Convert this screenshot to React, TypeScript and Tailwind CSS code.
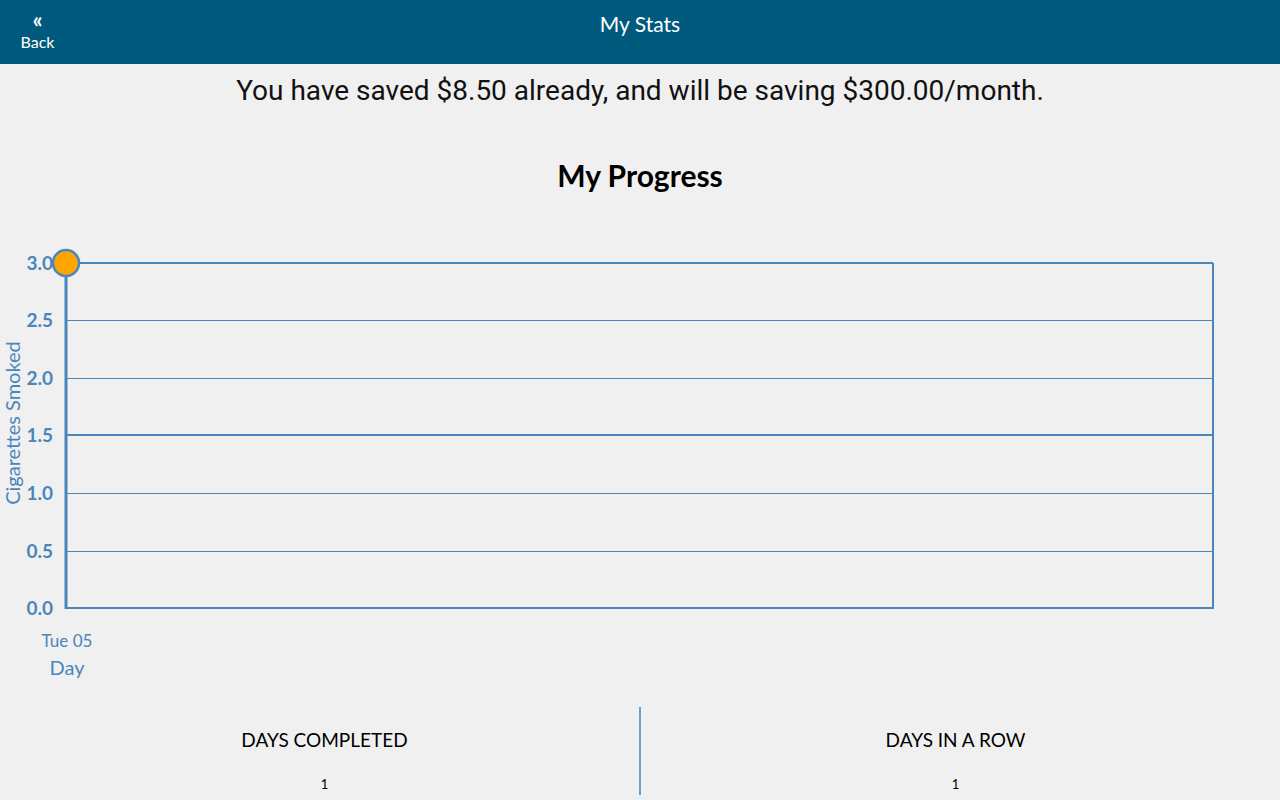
import React from "react";

const BLUE = "#4a86bb";

function Chart() {
  const left = 66;
  const right = 1213;
  const ticks: [number, number][] = [
    [3.0, 22],
    [2.5, 79],
    [2.0, 137],
    [1.5, 194],
    [1.0, 252],
    [0.5, 310],
    [0.0, 367],
  ];
  return (
    <svg width="1280" height="460" viewBox="0 0 1280 460" className="block">
      {ticks.map(([t, y]) => {
        const thick = t === 1.5 || t === 3.0 || t === 0;
        return (
          <line
            key={t}
            x1={left}
            x2={right}
            y1={thick ? y : y + 0.5}
            y2={thick ? y : y + 0.5}
            stroke={BLUE}
            strokeWidth={thick ? 2 : 1}
          />
        );
      })}
      <line x1={left} x2={left} y1={22} y2={368} stroke={BLUE} strokeWidth={3} />
      <line x1={right} x2={right} y1={22} y2={368} stroke={BLUE} strokeWidth={2} />
      {ticks.map(([t, y]) => (
        <text
          key={"l" + t}
          x={53}
          y={y + 7}
          textAnchor="end"
          fill={BLUE}
          fontFamily="Lato, 'Open Sans', sans-serif"
          fontWeight={700}
          fontSize={19}
        >
          {t.toFixed(1)}
        </text>
      ))}
      <text
        transform="translate(20 182) rotate(-90)"
        textAnchor="middle"
        fill={BLUE}
        fontFamily="Lato, 'Open Sans', sans-serif"
        fontSize={20}
      >
        Cigarettes Smoked
      </text>
      <text
        x={67}
        y={406}
        textAnchor="middle"
        fill={BLUE}
        fontFamily="Lato, 'Open Sans', sans-serif"
        fontSize={17}
      >
        Tue 05
      </text>
      <text
        x={67}
        y={434}
        textAnchor="middle"
        fill={BLUE}
        fontFamily="Lato, 'Open Sans', sans-serif"
        fontSize={20}
      >
        Day
      </text>
      <circle cx={66} cy={22} r={13} fill="#ffa500" stroke={BLUE} strokeWidth={2.5} />
    </svg>
  );
}

export default function App() {
  return (
    <div
      className="w-[1280px] h-[800px] bg-[#f0f0f0] flex flex-col overflow-hidden"
      style={{ fontFamily: "Lato, 'Open Sans', sans-serif" }}
    >
      <header className="h-16 bg-[#005a7d] relative flex justify-center shrink-0">
        <div className="absolute left-0 top-0 w-[75px] flex flex-col items-center pt-[10px] text-white">
          <span className="text-[22px] leading-[20px] font-bold">«</span>
          <span className="text-[16px] leading-[20px] mt-[2px]">Back</span>
        </div>
        <h1 className="text-white text-[21px] leading-none pt-[13px]">My Stats</h1>
      </header>
      <p
        className="text-center text-[28px] text-[#111] leading-none mt-[13px]"
        style={{ fontFamily: "Roboto, sans-serif" }}
      >
        You have saved $8.50 already, and will be saving $300.00/month.
      </p>
      <h2 className="text-center text-[30px] font-bold text-black leading-none mt-[55px]">
        My Progress
      </h2>
      <div className="mt-[51px]">
        <Chart />
      </div>
      <div className="flex px-[10px] mt-[6px] h-[88px]">
        <div className="flex-1 flex flex-col items-center pt-[23px]">
          <span className="text-[19px] leading-none text-black">DAYS COMPLETED</span>
          <span className="text-[13px] leading-none text-black mt-[29px]">1</span>
        </div>
        <div className="w-[2px] bg-[#6f9fcc]" />
        <div className="flex-1 flex flex-col items-center pt-[23px]">
          <span className="text-[19px] leading-none text-black">DAYS IN A ROW</span>
          <span className="text-[13px] leading-none text-black mt-[29px]">1</span>
        </div>
      </div>
    </div>
  );
}
